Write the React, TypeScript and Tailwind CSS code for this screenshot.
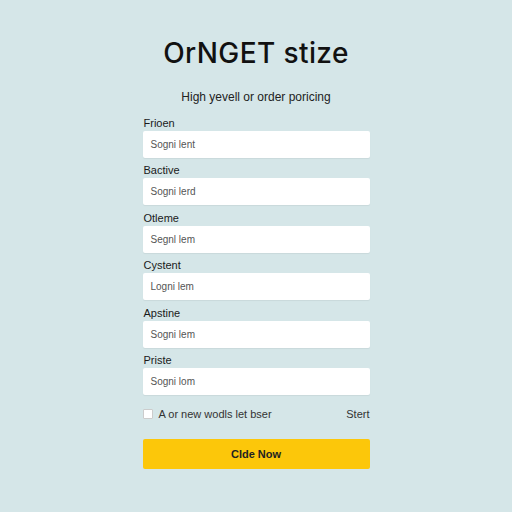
import React from 'react';

const fields = [
  { label: 'Frioen', placeholder: 'Sogni lent' },
  { label: 'Bactive', placeholder: 'Sogni lerd' },
  { label: 'Otleme', placeholder: 'Segnl lem' },
  { label: 'Cystent', placeholder: 'Logni lem' },
  { label: 'Apstine', placeholder: 'Sogni lem' },
  { label: 'Priste', placeholder: 'Sogni lom' },
];

export default function App() {
  return (
    <div className="w-[512px] h-[512px] bg-[#d5e6e8] font-['Liberation_Sans',Arial,sans-serif] flex flex-col items-center">
      <h1 className="mt-[37px] text-[28px] leading-[32px] text-[#111] font-['Inter',sans-serif] font-medium tracking-[0.4px]">OrNGET stize</h1>
      <p className="mt-[21px] text-[12px] leading-[14px] text-[#222]">High yevell or order poricing</p>

      <div className="w-[227px] mt-[13px] flex flex-col gap-[6.4px]">
        {fields.map((f) => (
          <div key={f.label} className="flex flex-col">
            <label className="text-[11px] leading-[13px] text-[#1a1a1a] pl-px">{f.label}</label>
            <div className="mt-[1px] h-[27px] bg-white rounded-[2px] shadow-[0_1px_1px_rgba(0,0,0,0.06)] flex items-center px-[8px]">
              <span className="text-[10px] text-[#555]">{f.placeholder}</span>
            </div>
          </div>
        ))}
      </div>

      <div className="w-[227px] mt-[13px] h-[13px] flex items-center justify-between">
        <label className="flex items-center gap-[6px] text-[11px] text-[#333]">
          <span className="w-[10px] h-[10px] bg-white border border-[#ccc] rounded-[1px]" />
          A or new wodls let bser
        </label>
        <span className="text-[11px] text-[#333]">Stert</span>
      </div>

      <button className="w-[227px] h-[30px] mt-[18px] bg-[#fcc70a] rounded-[2px] text-[11px] font-semibold text-[#222]">
        Clde Now
      </button>
    </div>
  );
}
